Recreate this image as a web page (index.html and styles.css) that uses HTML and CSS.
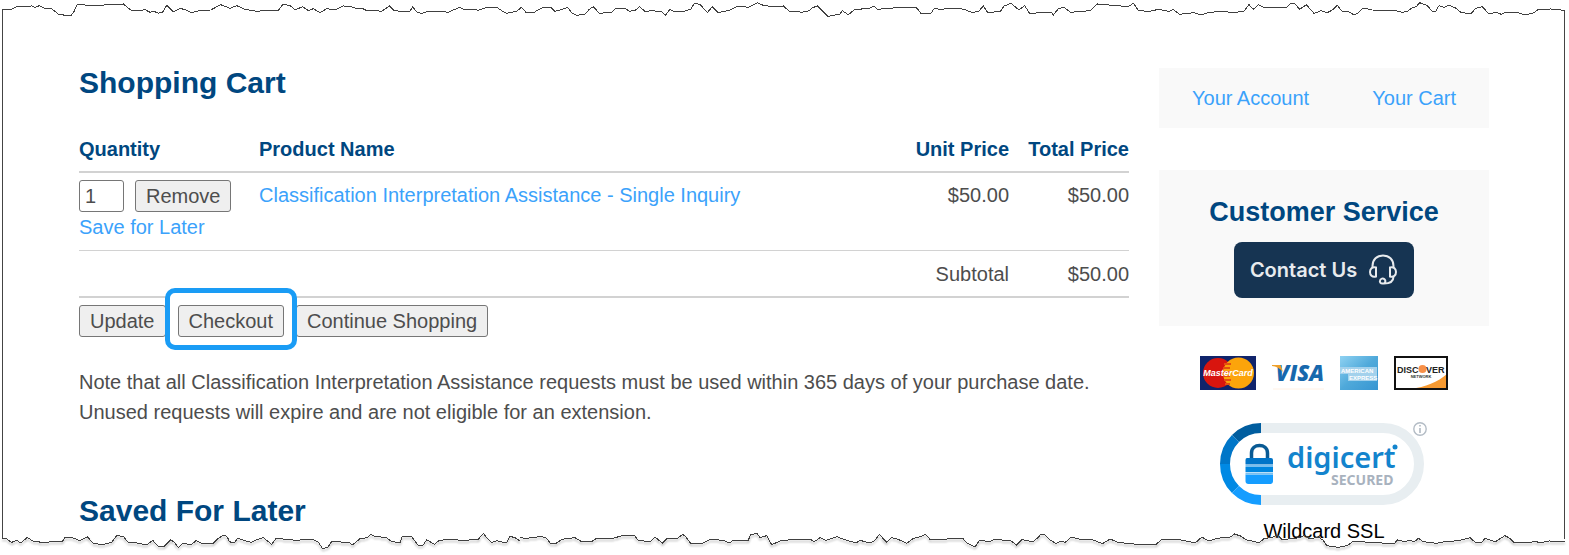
FILE: index.html
```html
<!DOCTYPE html>
<html lang="en">
<head>
<meta charset="utf-8">
<title>Shopping Cart</title>
<link rel="stylesheet" href="styles.css">
</head>
<body>
<div class="page">
  <main class="main">
    <h1 class="title">Shopping Cart</h1>
    <form class="cart">
      <table class="cart-table">
        <thead>
          <tr><th class="col-qty">Quantity</th><th>Product Name</th><th class="col-price">Unit Price</th><th class="col-price">Total Price</th></tr>
        </thead>
        <tbody>
          <tr class="item">
            <td>
              <div class="qty"><input class="qty-input" type="text" value="1" aria-label="Quantity"><button class="btn" type="button">Remove</button></div>
              <a href="#">Save for Later</a>
            </td>
            <td><a href="#">Classification Interpretation Assistance - Single Inquiry</a></td>
            <td class="col-price">$50.00</td>
            <td class="col-price">$50.00</td>
          </tr>
          <tr class="subtotal"><td></td><td></td><td class="col-price">Subtotal</td><td class="col-price">$50.00</td></tr>
        </tbody>
      </table>
      <div class="actions">
        <button class="btn" type="button">Update</button>
        <span class="highlight"><button class="btn" type="button">Checkout</button></span>
        <button class="btn" type="button">Continue Shopping</button>
      </div>
    </form>
    <p class="note">Note that all Classification Interpretation Assistance requests must be used within 365 days of your purchase date.<br>Unused requests will expire and are not eligible for an extension.</p>
    <h2 class="title">Saved For Later</h2>
  </main>

  <aside class="side">
    <nav class="account"><a href="#">Your Account</a><a href="#">Your Cart</a></nav>
    <section class="service">
      <h2 class="service-title">Customer Service</h2>
      <a class="contact" href="#">Contact Us
        <svg width="30" height="32" viewBox="0 0 30 32" fill="none" stroke="currentColor" stroke-width="2">
          <path d="M4.500 14V12C4.500 5.500 9 1.500 15 1.500S25.500 5.500 25.500 12V14"/>
          <path d="M8 13.500C4 12.500 2 15 2 18S4 23.500 8 22.500Z M22 13.500C26 12.500 28 15 28 18S26 23.500 22 22.500Z"/>
          <path d="M25.500 22.500C25.500 27 22 29.500 16 29.500H14.500C12.500 29.500 11.500 28 12 26.500C12.500 24.500 15 24 16.500 25.200C18 26.500 17.500 28.500 16 29.500"/>
        </svg>
      </a>
    </section>
    <div class="cards">
      <svg width="56" height="34" viewBox="0 0 56 34" role="img" aria-label="MasterCard">
        <path fill="#10246b" d="M0 0h56v34H0z"/>
        <circle cx="18" cy="17" r="15" fill="#d8150e"/><circle cx="38.500" cy="17" r="15.500" fill="#fca40b"/>
        <path d="M24 8h7M23 12h7M23 16h7M23 20h7M24 24h7M25 28h5" stroke="#e4500f" stroke-width="2"/>
        <text x="28" y="20" text-anchor="middle" class="mc-text">MasterCard</text>
      </svg>
      <svg width="52" height="34" viewBox="0 0 52 34" role="img" aria-label="Visa">
        <text x="28" y="25" text-anchor="middle" class="visa-text">VISA</text>
        <path fill="#efa02a" d="M0 9h8.500l2.500 7C8 12 4 10.500 0 10z"/>
        <path stroke="#fff1e4" d="M1 33h51"/>
      </svg>
      <svg width="38" height="34" viewBox="0 0 38 34" role="img" aria-label="American Express">
        <defs><linearGradient id="amex" x2="1" y2="1"><stop stop-color="#8fd2f2"/><stop offset=".5" stop-color="#4fa9da"/><stop offset="1" stop-color="#3796d2"/></linearGradient></defs>
        <path fill="url(#amex)" d="M0 0h38v34H0z"/>
        <path fill="#a3d1ec" d="M0 11h37v7H0zM8 18h29v7H8z"/>
        <text x="1" y="17" class="amex-text">AMERICAN</text><text x="9" y="24" class="amex-text">EXPRESS</text>
      </svg>
      <svg width="54" height="34" viewBox="0 0 54 34" role="img" aria-label="Discover Network">
        <path fill="#fff" d="M0 0h54v34H0z"/>
        <path fill="#f79a31" d="M53 18v15H17C31 31 44 26 53 18z"/>
        <circle cx="28.500" cy="13" r="4" fill="#f79048"/>
        <path fill="none" stroke="#111" stroke-width="2" d="M1 1h52v32H1z"/>
        <text x="3" y="17" class="disc-text">DISC</text><text x="32" y="17" class="disc-text">VER</text>
        <text x="27" y="22" text-anchor="middle" class="disc-small">NETWORK</text>
      </svg>
    </div>
    <svg class="seal" width="210" height="86" viewBox="0 0 210 86" role="img" aria-label="DigiCert Secured">
      <g fill="none" stroke-width="10">
        <path stroke="#e8eef1" d="M42 7H164A36 36 0 0 1 164 79H42"/>
        <path stroke="#005d9f" d="M42 7A36 36 0 0 0 16.500 17.500"/>
        <path stroke="#0076c8" d="M16.500 17.500A36 36 0 0 0 6 43"/>
        <path stroke="#0089e4" d="M6 43A36 36 0 0 0 16.500 68.500"/>
        <path stroke="#159dff" d="M16.500 68.500A36 36 0 0 0 42 79"/>
        <path stroke="#095a94" stroke-width="3.500" d="M32.500 38V32C32.500 22 48.500 22 48.500 32V38"/>
      </g>
      <path fill="#0074c8" d="M28 37h24q2 0 2 2v4.500H26.500V39q0-2 1.500-2z"/>
      <path fill="#0086df" d="M26.500 46H54v5H26.500z"/>
      <path fill="#159dff" d="M26.500 53.500H54V60q0 3-3 3H29.500q-3 0-3-3z"/>
      <path stroke="#79bfef" stroke-width="2" d="M26.500 45H54M26.500 52.500H54"/>
      <text x="68" y="47" class="dc-name">digicert</text>
      <circle cx="176" cy="26" r="2.500" fill="#1384cd"/>
      <text x="112" y="64" class="dc-secured">SECURED</text>
      <circle cx="201" cy="8" r="6.200" fill="#fff" stroke="#b3bcc5" stroke-width="1.400"/>
      <path stroke="#a5afba" stroke-width="1.400" d="M201 7v5M201 4v1.500"/>
    </svg>
    <p class="ssl">Wildcard SSL</p>
  </aside>

  <svg class="edge edge-top" viewBox="0 0 4707 90" preserveAspectRatio="none" aria-hidden="true">
    <polyline points="7,28 37,27 50,20 95,18 105,22 118,17 132,24 155,26 176,43 212,48 222,35 232,12 255,15 285,18 320,14 370,12 392,30 415,32 435,29 450,37 462,34 475,40 488,36 500,16 520,36 540,26 555,28 575,38 600,31 632,30 662,14 690,25 710,17 735,28 770,34 800,31 835,31 850,12 872,18 885,30 908,20 925,32 940,26 960,38 980,26 1005,30 1030,18 1050,19 1072,26 1085,24 1100,32 1115,30 1145,34 1168,18 1180,30 1200,34"/>
    <g transform="translate(1200 0)"><polyline points="0,34 10,36 30,34 38,20 52,38 66,40 78,36 105,33 120,35 132,34 142,38 160,30 180,22 195,30 215,27 235,31 260,22 290,22 308,34 320,40 350,34 364,22 378,37 403,37 412,31 425,24 440,22 452,22 465,34 485,29 503,22 515,38 530,46 555,42 568,28 580,20 598,40 635,37 648,24 675,26 690,34 707,30 718,20 735,34 760,32 785,36 797,45 810,28 822,34 845,36 872,28 883,10 900,13 922,38 937,20 955,38 990,30 1015,18 1045,22 1072,8 1092,17 1125,20 1150,18 1168,34 1200,36"/></g>
    <g transform="translate(2400 0)"><polyline points="0,38 28,32 35,24 52,18 84,49 120,42 127,32 145,44 165,28 205,26 222,18 232,28 280,24 300,22 350,24 363,40 393,40 402,26 425,28 450,24 480,25 500,31 515,37 535,35 550,18 564,39 590,35 600,36 612,18 633,10 657,30 674,17 690,42 720,37 755,38 760,45 775,26 792,22 812,37 870,32 892,12 985,20 1000,10 1016,32 1050,34 1075,28 1107,34"/></g>
    <g transform="translate(3507 0)"><polyline points="0,34 12,28 32,43 75,38 98,45 120,37 150,35 200,37 225,33 240,14 253,28 268,14 283,22 350,24 365,11 378,12 392,28 412,14 435,40 457,32 475,38 490,30 505,16 520,35 540,36 556,45 568,38 583,24 610,30 680,32 700,37 715,34 728,24 742,20 752,8 775,17 790,35 800,34 810,17 825,22 840,16 862,25 875,37 905,42 920,25 940,20 958,40 985,38 997,43 1012,36 1040,36 1070,45 1095,38 1108,28 1145,27 1187,31"/></g>
  </svg>
  <svg class="edge edge-bottom" viewBox="0 0 4707 90" preserveAspectRatio="none" aria-hidden="true">
    <polyline points="7,40 20,42 35,52 50,46 62,54 82,37 98,48 125,52 168,50 188,48 195,36 215,37 240,47 262,35 280,56 310,58 335,52 350,32 370,34 385,53 410,54 440,60 458,46 475,64 492,65 512,44 525,54 535,68 548,56 575,58 588,47 602,54 638,56 652,42 672,30 682,36 688,50 702,54 713,40 735,47 755,52 770,44 790,38 815,58 828,40 890,46 935,42 955,52 967,70 983,68 995,50 1048,52 1057,60 1080,41 1102,38 1112,28 1125,34 1160,38 1172,48 1200,54 1206,36 1235,35 1255,62 1270,60 1280,44 1303,58 1318,46 1365,42 1380,47 1435,43 1450,25 1465,44 1475,52 1490,47 1520,54 1530,34 1545,38 1560,48"/>
    <g transform="translate(1560 0)"><polyline points="0,38 20,40 65,34 80,40 90,54 110,54 125,43 165,38 185,50 215,50 230,40 270,42 315,30 342,30 355,46 390,50 405,36 427,54 440,41 472,40 488,28 498,36 512,55 550,54 570,43 610,46 628,54 640,46 685,46 692,28 712,26 720,38 740,32 755,59 780,48 830,42 870,42 883,50 900,38 918,46 950,35 975,44 1008,54 1020,46 1050,54 1063,48 1078,28 1100,52 1115,38 1130,41 1160,55 1180,40 1198,36 1217,28 1230,43 1270,44 1290,40 1330,42 1340,54 1365,66 1378,46 1410,50 1420,44 1470,46 1490,60 1505,44 1540,50 1560,32"/></g>
    <g transform="translate(3120 0) scale(1.012 1)"><polyline points="0,28 15,30 28,44 48,56 60,48 75,52 92,36 120,43 155,44 185,56 208,42 230,52 280,57 345,57 360,44 410,43 460,54 480,36 500,48 525,40 565,36 577,27 597,34 610,44 650,53 665,40 685,38 705,30 718,44 770,38 785,30 800,42 825,36 840,46 850,62 885,67 910,62 930,48 975,52 1050,56 1060,45 1080,50 1098,46 1110,50 1122,40 1135,50 1175,55 1200,50 1240,47 1275,38 1290,52 1307,54 1320,40 1350,50 1378,32 1390,38 1405,52 1445,54 1470,48 1480,54 1510,48 1555,49"/></g>
  </svg>
</div>
</body>
</html>
```
FILE: styles.css
```css
* { box-sizing: border-box; }
body {
  margin: 0;
  background: #fff;
  color: #4d4d4d;
  font: 20px/30px "Liberation Sans", Arial, sans-serif;
}
a { color: #3ba2fb; text-decoration: none; }
.page {
  position: relative;
  min-height: 100vh;
  display: grid;
  grid-template-columns: minmax(0, 1fr) 330px;
  gap: 30px;
  padding: 63px 80px 9px 79px;
}
.page::before {
  content: "";
  position: absolute;
  inset: 10px 4px 16px 2px;
  border: solid #444;
  border-width: 0 1px;
  pointer-events: none;
}
.title {
  margin: 0;
  color: #004780;
  font-size: 30px;
  line-height: 40px;
}
.cart { margin-top: 31px; }
.cart-table { width: 100%; border-collapse: separate; border-spacing: 0; }
.cart-table th, .cart-table td { padding: 7px 0; text-align: left; vertical-align: top; }
.cart-table th { padding-top: 0; color: #004780; border-bottom: 2px solid #d2d2d2; }
.cart-table .col-qty { width: 180px; }
.cart-table .col-price { width: 120px; text-align: right; }
.item td { border-bottom: 1px solid #d2d2d2; }
.cart-table .item td { padding-bottom: 8px; }
.cart-table .subtotal td { padding-top: 8px; border-bottom: 2px solid #d2d2d2; }
.qty { display: flex; gap: 11px; }
.qty-input {
  width: 45px;
  height: 32px;
  padding: 0 5px;
  border: 1px solid #767676;
  border-radius: 3px;
  font: inherit;
  color: inherit;
}
.btn {
  height: 32px;
  padding: 0 10px;
  border: 1px solid #767676;
  border-radius: 3px;
  background: #efefef;
  font: inherit;
  line-height: 30px;
  color: inherit;
}
.actions { display: flex; gap: 12px; margin-top: 7px; }
.highlight { position: relative; z-index: 1; display: flex; }
.highlight::before {
  content: "";
  position: absolute;
  z-index: -1;
  inset: -17px -13px -13px;
  border: 5px solid #1a9cf5;
  border-radius: 10px;
  background: #fff;
}
.note { margin: 30px 0 64px; }
.side { padding-top: 5px; }
.account {
  display: flex;
  justify-content: space-between;
  padding: 15px 33px;
  background: #f9f9f9;
}
.service {
  display: flex;
  flex-direction: column;
  align-items: center;
  margin-top: 42px;
  padding: 24px 0 28px;
  background: #f9f9f9;
}
.service-title { margin: 0 0 12px; color: #004780; font-size: 27px; line-height: 36px; }
.contact {
  display: flex;
  align-items: center;
  justify-content: center;
  gap: 11px;
  width: 180px;
  height: 56px;
  border-radius: 8px;
  background: #163452;
  color: #e8ebee;
  font: 600 20px/30px Inter, sans-serif;
}
.cards { display: flex; justify-content: center; gap: 16px; margin-top: 30px; }
.seal { display: block; margin: 31px auto 0; }
.ssl { margin: 9px 0 0; color: #000; text-align: center; }
.mc-text { font: italic 700 9px "Liberation Sans", sans-serif; fill: #fff; }
.visa-text { font: italic 800 22px "Open Sans", sans-serif; fill: #1768ad; }
.amex-text { font: 700 6px "Liberation Sans", sans-serif; fill: #fff; }
.disc-text { font: 700 9px "Liberation Sans", sans-serif; fill: #222; }
.disc-small { font: 700 4px "Liberation Sans", sans-serif; fill: #333; }
.dc-name { font: 600 29px "Noto Sans", sans-serif; fill: #1384cd; }
.dc-secured { font: 700 14px "Noto Sans", sans-serif; fill: #a8b2be; }
.edge { position: absolute; left: 0; width: 100%; height: 30px; pointer-events: none; }
.edge-top { top: 0; }
.edge-bottom { bottom: 0; filter: drop-shadow(0 2px 1px #aaa); }
.edge polyline { fill: none; stroke: #404040; stroke-width: 1px; vector-effect: non-scaling-stroke; shape-rendering: crispEdges; }
```
